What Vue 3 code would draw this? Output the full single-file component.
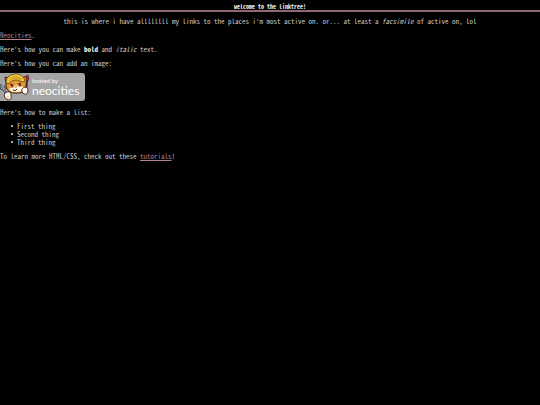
<template>
  <div class="page">
    <header class="banner">
      <h1>welcome to the linktree!</h1>
    </header>

    <main>
      <p class="intro">
        this is where i have allllllll my links to the places i'm most active on. or... at least a <em>facsimile</em> of active on, lol
      </p>
      <p><a href="#neocities">Neocities</a>.</p>
      <p>Here's how you can make <strong>bold</strong> and <em>italic</em> text.</p>
      <p>Here's how you can add an image:</p>

      <svg class="badge" viewBox="0 0 85 28" role="img" aria-label="hosted by neocities">
        <rect x="-4" width="89" height="28" rx="3" fill="#a5a5a5" />
        <!-- fork -->
        <path d="M1 11v4q1 2 3 1t1-4M3 15l3 6" fill="none" stroke="#303944" stroke-width="2.2" />
        <path d="M1 11v4q1 2 3 1t1-4M3 15l3 6" fill="none" stroke="#bdc9d4" stroke-width="0.8" />
        <!-- cat -->
        <path d="M6 10 5 4l4 1q7-4 13 0l5-2v7q1 8-7 10h-8q-7-3-6-10Z" fill="#e99435" stroke="#3b2418" stroke-width="1" />
        <path d="M9 16q2-2 4-1l3-3 3 2q3-1 5 0-1 4-5 5h-6q-3-1-4-3Z" fill="#fff5df" />
        <path d="M6 9q1-8 10-8 7 0 9 7l-3 1Q15 4 8 11Z" fill="#f5c936" stroke="#55401d" stroke-width="0.8" />
        <path d="M10 5q6-3 12 1M9 8q6-5 12-1" fill="none" stroke="#a87924" stroke-width="0.6" />
        <path d="m10 11 3 1m5-1 3-1M13 17q2 2 4-1" fill="none" stroke="#352019" stroke-width="1" />
        <circle cx="12" cy="13" r="1" fill="#352019" />
        <circle cx="20" cy="12" r="1" fill="#352019" />
        <path d="m15 14 2-1-1 2Z" fill="#a94b36" />
        <!-- brush -->
        <path d="m26 16 1-9" stroke="#4d2c28" stroke-width="2" />
        <path d="m26 7 0-4 2-1 1 4-1 2Z" fill="#a82b36" stroke="#49202a" stroke-width="0.5" />
        <!-- paws -->
        <path d="M22 19q-1-4 3-5 3 0 3 3 0 5-4 4Z" fill="#fff6e5" stroke="#49372d" stroke-width="1" />
        <path d="M5 25q-2-5 2-6 4-1 4 3 1 5-3 5Z" fill="#fff6e5" stroke="#49372d" stroke-width="1" />
        <path d="M6 24v2m2-3v3" stroke="#d39a54" stroke-width="0.6" />
        <text x="32" y="10" class="badge-small">hosted by</text>
        <text x="32" y="22" class="badge-name">neocities</text>
      </svg>

      <p>Here's how to make a list:</p>
      <ul>
        <li v-for="item in items" :key="item">{{ item }}</li>
      </ul>
      <p>To learn more HTML/CSS, check out these <a href="#tutorials">tutorials</a>!</p>
    </main>
  </div>
</template>

<script setup>
const items = ['First thing', 'Second thing', 'Third thing']
</script>

<style>
html,
body {
  background: #000;
}
</style>

<style scoped>
.page {
  padding-bottom: 8px;
  color: #c8c8c8;
  font-family: "Noto Sans Mono CJK JP", "DejaVu Sans Mono", monospace;
  font-size: 7px;
  line-height: 8px;
}

.banner {
  padding-top: 4px;
  border-bottom: 2px solid #8f6873;
}

h1 {
  margin: 0;
  color: #f4f4f4;
  font-size: 6px;
  line-height: 6px;
  text-align: center;
}

main {
  display: flex;
  flex-direction: column;
  gap: 6px;
  padding-top: 5px;
}

p,
ul {
  margin: 0;
}

.intro {
  text-align: center;
}

strong {
  color: #f4f4f4;
}

a {
  color: #b58391;
  text-decoration: underline 1px;
  text-decoration-skip-ink: none;
  text-underline-offset: 1px;
}

ul {
  padding-left: 11px;
  list-style: none;
}

li {
  display: flex;
  align-items: center;
  gap: 4px;
}

li::before {
  content: "";
  width: 2px;
  height: 2px;
  border-radius: 1px;
  background: #e4e4e4;
}

.badge {
  display: block;
  width: 85px;
  height: 28px;
  margin-bottom: 1px;
}

.badge-small,
.badge-name {
  fill: #fff;
  font-family: Lato, sans-serif;
}

.badge-small {
  font-size: 6px;
}

.badge-name {
  font-size: 12px;
}
</style>
